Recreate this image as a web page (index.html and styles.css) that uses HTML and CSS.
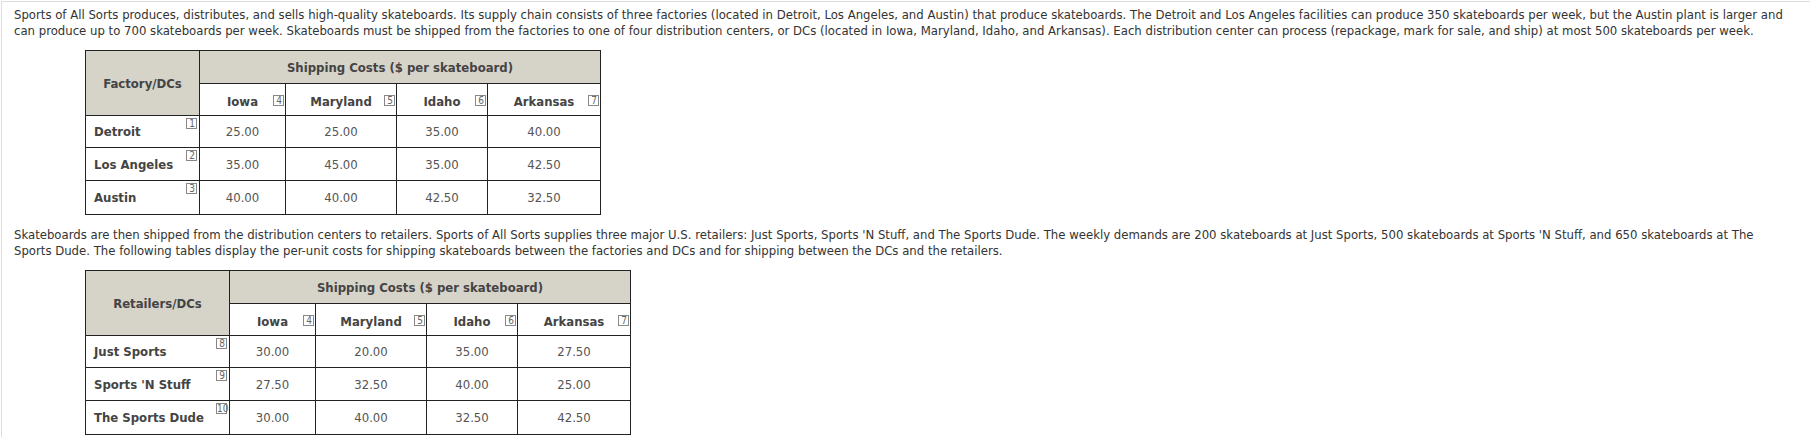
FILE: index.html
```html
<!DOCTYPE html>
<html>
<head>
<meta charset="utf-8">
<link rel="stylesheet" href="styles.css">
</head>
<body>
<div class="frame">
  <p class="para">Sports of All Sorts produces, distributes, and sells high-quality skateboards. Its supply chain consists of three factories (located in Detroit, Los Angeles, and Austin) that produce skateboards. The Detroit and Los Angeles facilities can produce 350 skateboards per week, but the Austin plant is larger and can produce up to 700 skateboards per week. Skateboards must be shipped from the factories to one of four distribution centers, or DCs (located in Iowa, Maryland, Idaho, and Arkansas). Each distribution center can process (repackage, mark for sale, and ship) at most 500 skateboards per week.</p>

  <table class="cost t1">
    <colgroup>
      <col class="c0"><col class="c1"><col class="c2"><col class="c3"><col class="c4">
    </colgroup>
    <tr class="hrow1">
      <th class="corner" rowspan="2">Factory/DCs</th>
      <th class="span" colspan="4">Shipping Costs ($ per skateboard)</th>
    </tr>
    <tr class="hrow2">
      <th class="dc">Iowa<span class="tag">4</span></th>
      <th class="dc">Maryland<span class="tag">5</span></th>
      <th class="dc">Idaho<span class="tag">6</span></th>
      <th class="dc">Arkansas<span class="tag">7</span></th>
    </tr>
    <tr>
      <th class="rowlabel">Detroit<span class="tag tag-r">1</span></th>
      <td>25.00</td><td>25.00</td><td>35.00</td><td>40.00</td>
    </tr>
    <tr class="mid">
      <th class="rowlabel">Los Angeles<span class="tag tag-r">2</span></th>
      <td>35.00</td><td>45.00</td><td>35.00</td><td>42.50</td>
    </tr>
    <tr class="last">
      <th class="rowlabel">Austin<span class="tag tag-r">3</span></th>
      <td>40.00</td><td>40.00</td><td>42.50</td><td>32.50</td>
    </tr>
  </table>

  <p class="para para2">Skateboards are then shipped from the distribution centers to retailers. Sports of All Sorts supplies three major U.S. retailers: Just Sports, Sports 'N Stuff, and The Sports Dude. The weekly demands are 200 skateboards at Just Sports, 500 skateboards at Sports 'N Stuff, and 650 skateboards at The Sports Dude. The following tables display the per-unit costs for shipping skateboards between the factories and DCs and for shipping between the DCs and the retailers.</p>

  <table class="cost t2">
    <colgroup>
      <col class="c0"><col class="c1"><col class="c2"><col class="c3"><col class="c4">
    </colgroup>
    <tr class="hrow1">
      <th class="corner" rowspan="2">Retailers/DCs</th>
      <th class="span" colspan="4">Shipping Costs ($ per skateboard)</th>
    </tr>
    <tr class="hrow2">
      <th class="dc">Iowa<span class="tag">4</span></th>
      <th class="dc">Maryland<span class="tag">5</span></th>
      <th class="dc">Idaho<span class="tag">6</span></th>
      <th class="dc">Arkansas<span class="tag">7</span></th>
    </tr>
    <tr>
      <th class="rowlabel">Just Sports<span class="tag tag-r">8</span></th>
      <td>30.00</td><td>20.00</td><td>35.00</td><td>27.50</td>
    </tr>
    <tr class="mid">
      <th class="rowlabel">Sports 'N Stuff<span class="tag tag-r">9</span></th>
      <td>27.50</td><td>32.50</td><td>40.00</td><td>25.00</td>
    </tr>
    <tr class="last">
      <th class="rowlabel">The Sports Dude<span class="tag tag-r">10</span></th>
      <td>30.00</td><td>40.00</td><td>32.50</td><td>42.50</td>
    </tr>
  </table>
</div>
</body>
</html>
```

FILE: styles.css
```css
html, body {
  margin: 0;
  padding: 0;
  background: #ffffff;
}

body {
  font-family: "DejaVu Sans Condensed", "DejaVu Sans", sans-serif;
  font-size: 13px;
  color: #333333;
}

.frame {
  margin: 1px 0 0 1px;
  border-top: 1px solid #dddddd;
  border-left: 1px solid #dddddd;
  padding: 5px 0 0 12px;
  height: 440px;
}

.para {
  margin: 0;
  line-height: 16px;
  padding-right: 18px;
}

.para2 {
  margin-top: 12px;
}

.cost {
  border-collapse: collapse;
  margin-left: 71px;
  table-layout: fixed;
  color: #444444;
}

.t1 {
  margin-top: 11px;
  width: 516px;
}

.t2 {
  margin-top: 11px;
  width: 546px;
}

.cost th,
.cost td {
  border: 1px solid #222222;
  position: relative;
  padding: 0;
  height: 31px;
  text-align: center;
}

.cost th {
  font-weight: bold;
  color: #444444;
}

.cost td {
  color: #555555;
}

.hrow1 th {
  height: 32px;
}

.hrow2 th {
  height: 27px;
  padding-top: 4px;
}

.mid th,
.mid td {
  height: 32px;
}

.last th,
.last td {
  height: 33px;
}

.corner,
.span {
  background: #d6d3c9;
}

.rowlabel {
  text-align: left !important;
  padding-left: 8px !important;
}

.t1 .c0 { width: 114px; }
.t2 .c0 { width: 144px; }
.c1 { width: 86px; }
.c2 { width: 111px; }
.c3 { width: 91px; }
.c4 { width: 113px; }

.tag {
  position: absolute;
  top: 11px;
  right: 1px;
  box-sizing: border-box;
  width: 11px;
  height: 11px;
  border: 1px solid #888888;
  font-size: 10px;
  line-height: 9px;
  padding-right: 1px;
  font-weight: normal;
  color: #666666;
  text-align: right;
  white-space: nowrap;
}

.tag-r {
  top: 2px;
  right: 2px;
}
```
